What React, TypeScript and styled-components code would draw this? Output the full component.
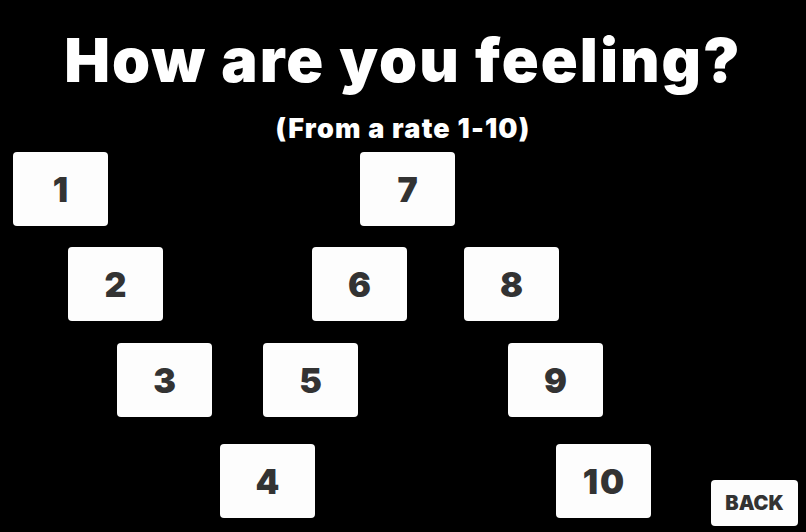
import React from "react";
import styled, { createGlobalStyle } from "styled-components";

const GlobalStyle = createGlobalStyle`
  html, body {
    margin: 0;
    padding: 0;
    background: #000;
  }
  body {
    font-family: "Inter", "Noto Sans", sans-serif;
  }
`;

const Page = styled.div`
  width: 806px;
  height: 532px;
  background: #000;
  display: flex;
  flex-direction: column;
  overflow: hidden;
`;

const Title = styled.h1`
  margin: 30px 0 0;
  font-size: 61px;
  line-height: 61px;
  font-weight: 900;
  letter-spacing: 2px;
  color: #fff;
  text-align: center;
`;

const Subtitle = styled.h2`
  margin: 24px 0 0;
  font-size: 27px;
  line-height: 28px;
  font-weight: 900;
  letter-spacing: 1.2px;
  color: #fff;
  text-align: center;
`;

const Board = styled.div`
  display: flex;
  flex-direction: column;
  margin-top: 9px;
`;

const Row = styled.div<{ $gap: number }>`
  display: flex;
  align-items: flex-start;
  margin-top: ${(p) => p.$gap}px;
  height: 74px;
`;

const Tile = styled.button<{ $left: number }>`
  flex: none;
  width: 95px;
  height: 74px;
  margin-left: ${(p) => p.$left}px;
  padding: 0 0 0 2px;
  border: none;
  border-radius: 4px;
  background: #fdfdfd;
  color: #333;
  font-family: "Inter", "Noto Sans", sans-serif;
  font-weight: 900;
  font-size: 34px;
  letter-spacing: 2px;
  cursor: pointer;
  display: flex;
  align-items: center;
  justify-content: center;
`;

const BackButton = styled.button<{ $left: number }>`
  flex: none;
  width: 87px;
  height: 46px;
  margin-left: ${(p) => p.$left}px;
  margin-top: 36px;
  padding: 0;
  border: none;
  border-radius: 4px;
  background: #fdfdfd;
  color: #333;
  font-family: "Inter", "Noto Sans", sans-serif;
  font-weight: 900;
  font-size: 20px;
  cursor: pointer;
`;

type Cell = { n: number; left: number };

const rows: { gap: number; cells: Cell[] }[] = [
  { gap: 0, cells: [{ n: 1, left: 13 }, { n: 7, left: 252 }] },
  { gap: 21, cells: [{ n: 2, left: 68 }, { n: 6, left: 149 }, { n: 8, left: 57 }] },
  { gap: 22, cells: [{ n: 3, left: 117 }, { n: 5, left: 51 }, { n: 9, left: 150 }] },
  { gap: 27, cells: [{ n: 4, left: 220 }, { n: 10, left: 241 }] },
];

export default function App() {
  return (
    <>
      <GlobalStyle />
      <Page>
        <Title>How are you feeling?</Title>
        <Subtitle>(From a rate 1-10)</Subtitle>
        <Board>
          {rows.map((row, i) => (
            <Row key={i} $gap={row.gap}>
              {row.cells.map((c) => (
                <Tile key={c.n} $left={c.left}>
                  {c.n}
                </Tile>
              ))}
              {i === rows.length - 1 && <BackButton $left={60}>BACK</BackButton>}
            </Row>
          ))}
        </Board>
      </Page>
    </>
  );
}
